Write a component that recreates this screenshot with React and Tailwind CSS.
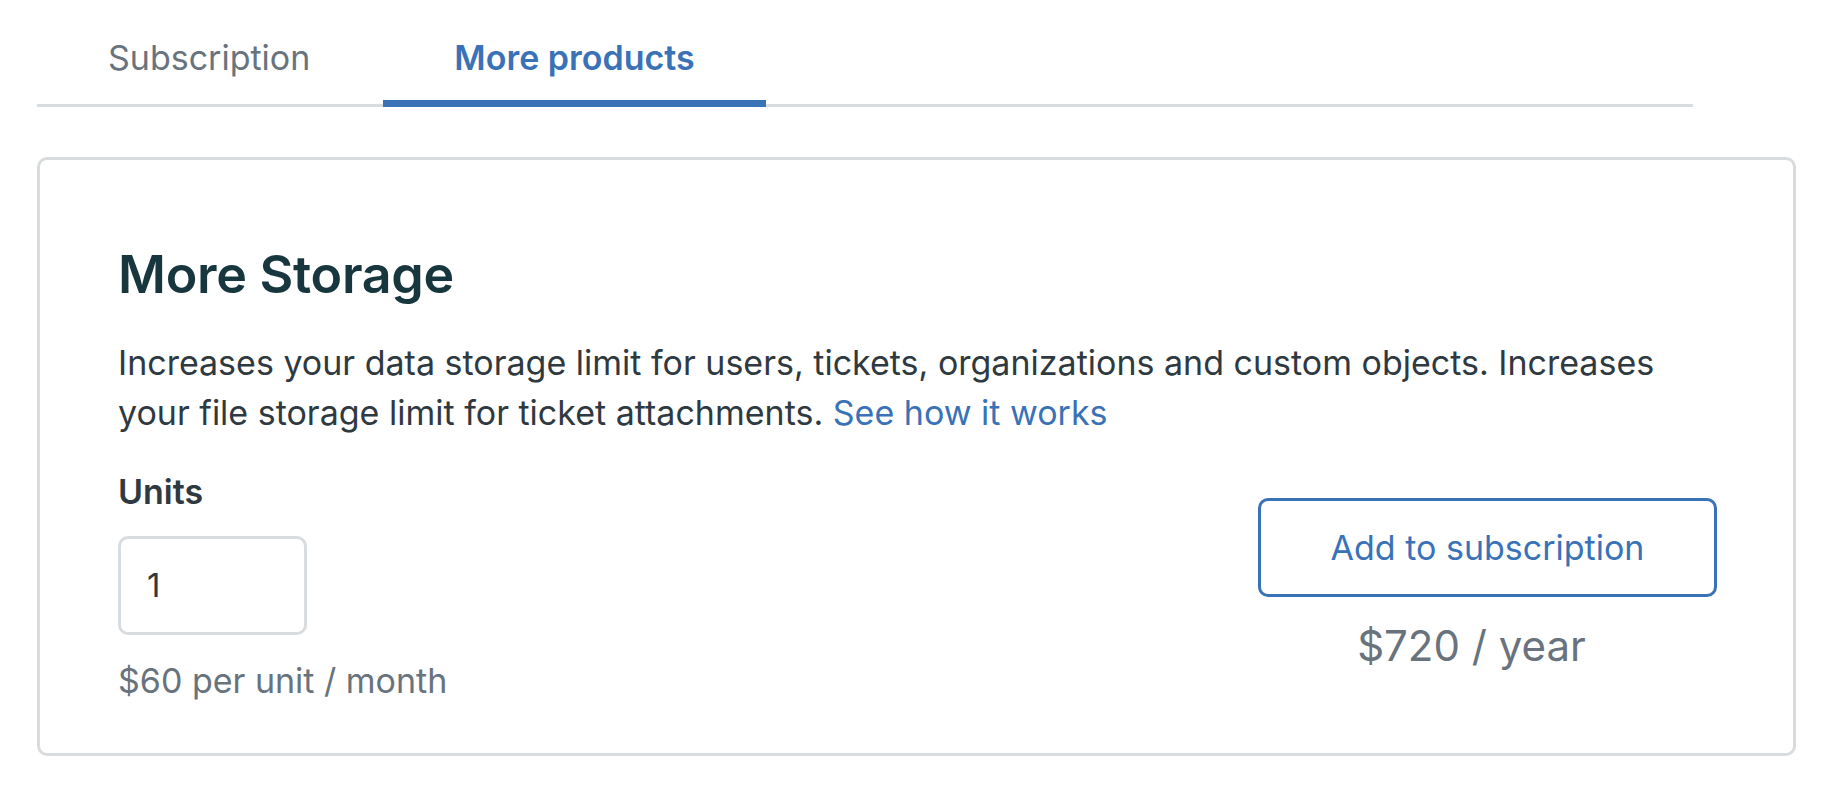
import React from "react";

export default function App() {
  return (
    <div
      className="w-[1834px] h-[792px] bg-white overflow-hidden"
      style={{ fontFamily: "Inter, 'Noto Sans', sans-serif" }}
    >
      {/* Tabs */}
      <div className="ml-[37px] w-[1656px] flex border-b-[3px] border-[#d8dcde]">
        <div className="px-[71px] h-[104px] flex items-center text-[34px] text-[#68737d] pt-[10px]">
          Subscription
        </div>
        <div className="relative ml-[2px] px-[71px] h-[104px] flex items-center text-[34px] font-semibold text-[#3a72b7] pt-[10px]">
          More products
          <div className="absolute left-0 right-0 -bottom-[3px] h-[7px] bg-[#3a72b7]" />
        </div>
      </div>

      {/* Card */}
      <div className="ml-[37px] mt-[50px] w-[1759px] h-[599px] border-[3px] border-[#d8dcde] rounded-[10px] px-[78px] pt-[84px]">
        <h2 className="text-[52px] leading-[62px] font-semibold text-[#17363d] tracking-[-0.3px]">
          More Storage
        </h2>
        <p className="mt-[32px] text-[34px] leading-[50px] text-[#2f3941]">
          Increases your data storage limit for users, tickets, organizations and custom objects. Increases
          <br />
          your file storage limit for ticket attachments.{" "}
          <span className="text-[#3a72b7]">See how it works</span>
        </p>
        <div className="mt-[30px] flex items-center justify-between">
          <div className="flex flex-col">
            <div className="text-[34px] leading-[48px] font-semibold text-[#2f3941]">Units</div>
            <div className="mt-[20px] w-[189px] h-[99px] border-[3px] border-[#d8dcde] rounded-[10px] flex items-center pl-[26px] text-[33px] text-[#2f3941]">
              1
            </div>
            <div className="mt-[22px] text-[34px] leading-[48px] text-[#68737d]">$60 per unit / month</div>
          </div>
          <div className="flex flex-col items-center -mr-[2px] mb-[2px]">
            <button className="w-[459px] h-[99px] border-[3px] border-[#3a72b7] rounded-[10px] text-[34px] text-[#3a72b7] flex items-center justify-center">
              Add to subscription
            </button>
            <div className="mt-[22px] mr-[32px] text-[42px] leading-[54px] text-[#68737d]">$720 / year</div>
          </div>
        </div>
      </div>
    </div>
  );
}
